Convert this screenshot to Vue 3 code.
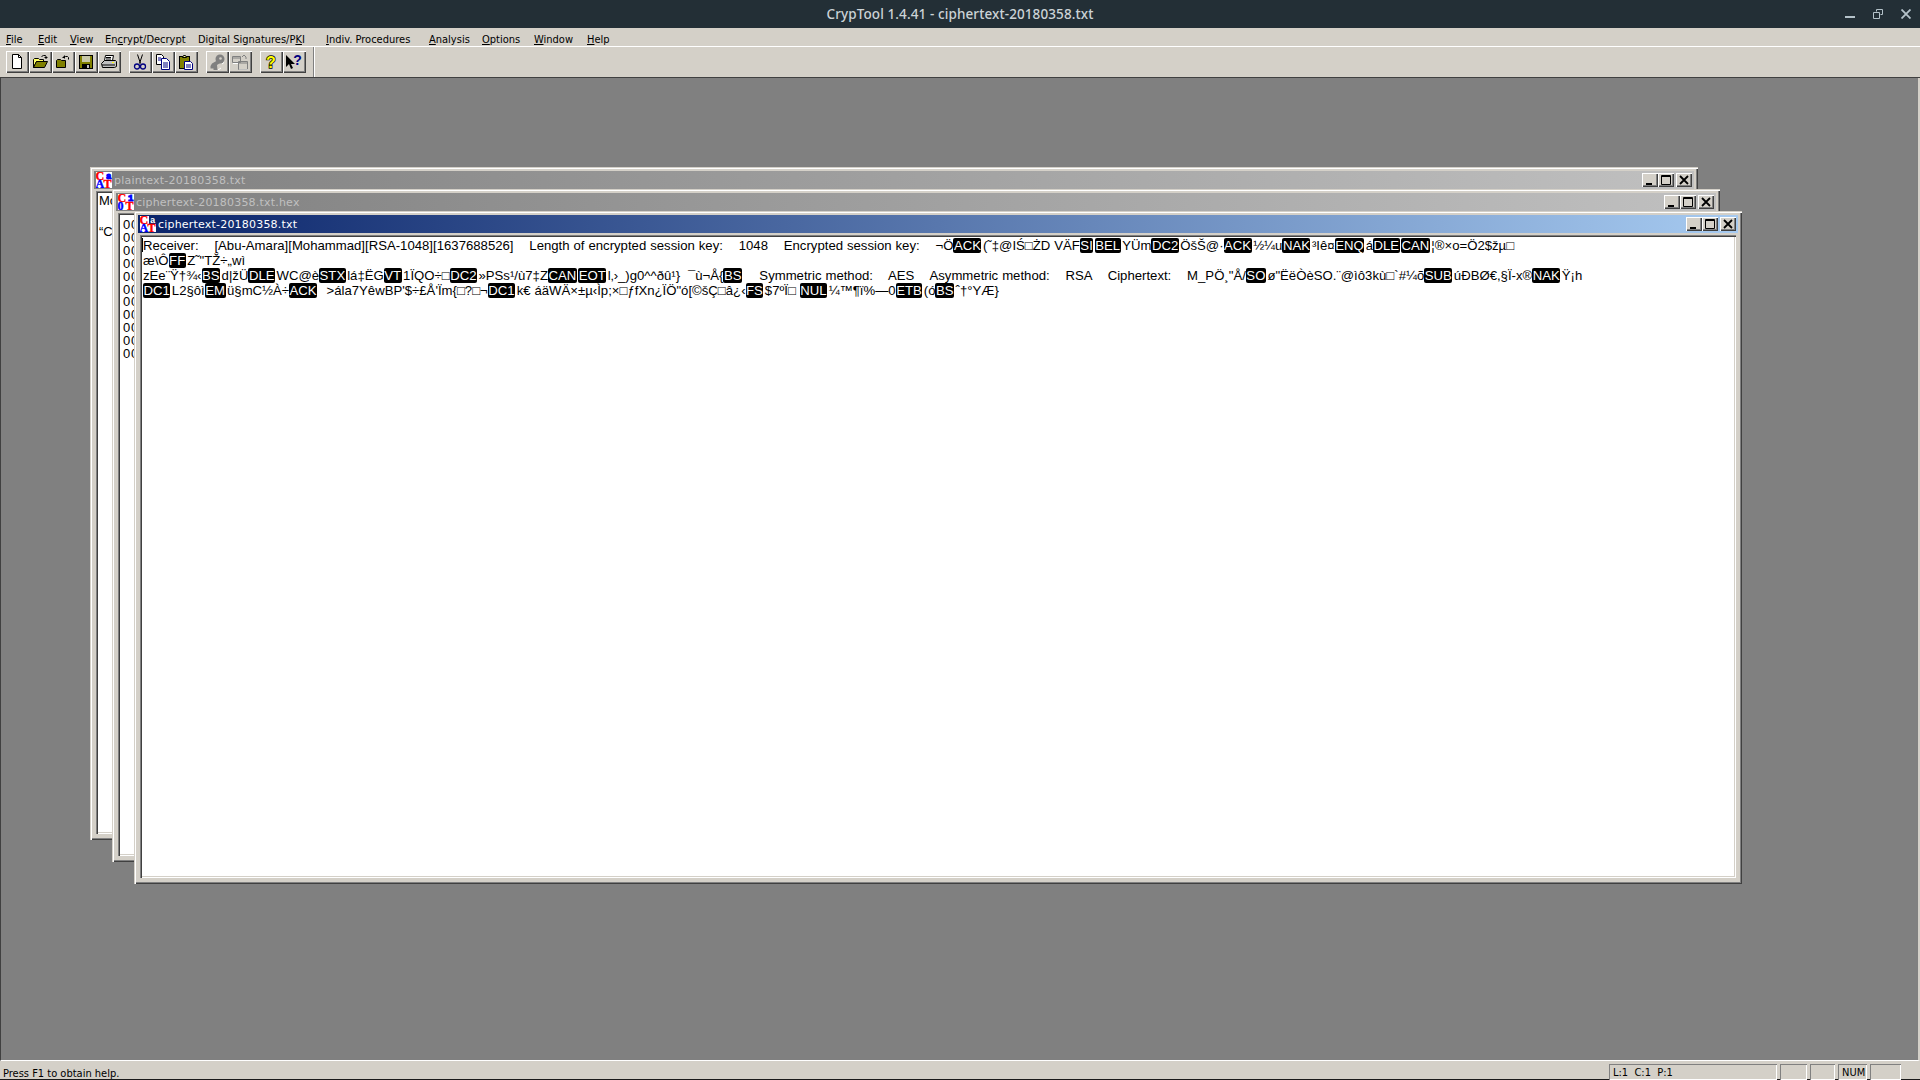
<template>
  <div class="app">
    <header class="titlebar">
      <span class="titlebar-text">CrypTool 1.4.41 - ciphertext-20180358.txt</span>
      <div class="wm-controls">
        <svg width="10" height="10" viewBox="0 0 10 10"><rect x="0" y="7" width="10" height="2" fill="#b4c2c9" /></svg>
        <svg width="10" height="10" viewBox="0 0 10 10"><path d="M3.5 2.5V0.5h6v5h-2M0.5 3.5h6v6h-6z" fill="none" stroke="#b4c2c9" /></svg>
        <svg width="10" height="10" viewBox="0 0 10 10"><path d="M0.5 0.5l9 9M9.5 0.5l-9 9" fill="none" stroke="#b4c2c9" stroke-width="1.8" /></svg>
      </div>
    </header>

    <nav class="menubar">
      <span v-for="m in menus" :key="m.label" class="menu-item" :style="{ width: m.w + 'px' }">
        {{ m.label.slice(0, m.u) }}<u>{{ m.label[m.u] }}</u>{{ m.label.slice(m.u + 1) }}
      </span>
    </nav>

    <div class="toolbar">
      <div class="tool-group">
        <button class="tool"><svg class="ico" viewBox="0 0 16 16"><path d="M3.5 .5h6l3 3v11h-9z" fill="#fff" stroke="#000" /><path d="M9.5 .5v3h3" fill="none" stroke="#000" /></svg></button>
        <button class="tool"><svg class="ico" viewBox="0 0 16 16"><path d="M1.5 13.5v-8l1-1h4l1 1h4v2h-7l-3 6" fill="#ffff66" stroke="#000" /><path d="M1.5 13.5l3-6h11l-3 6z" fill="#808000" stroke="#000" /><path d="M9.5 2.5l2-1h2l1 2" fill="none" stroke="#000" /><path d="M12 3h4l-2 2z" fill="#000" /></svg></button>
        <button class="tool"><svg class="ico" viewBox="0 0 16 16"><path d="M1.5 13.5v-7l1-1h3l1 1h4v7z" fill="#808000" stroke="#000" /><path d="M9.5 4.5v-1l1-1h2l1 1v2" fill="none" stroke="#000" /><path d="M7 4l3-3v3z" fill="#000" /></svg></button>
        <button class="tool"><svg class="ico" viewBox="0 0 16 16"><rect x="1.5" y="1.5" width="13" height="13" fill="#808000" stroke="#000" /><rect x="4" y="2" width="8" height="6" fill="#c8c8a8" /><rect x="4" y="10" width="8" height="4" fill="#000" /><rect x="9" y="11" width="2" height="3" fill="#c0c0c0" /></svg></button>
        <button class="tool"><svg class="ico" viewBox="0 0 16 16"><path d="M4.5 1.5h8l-1 5h-8z" fill="#fff" stroke="#000" /><path d="M.5 9.5l3-3h11l1 1v5l-2 1h-12z" fill="#c0c0c0" stroke="#000" /><path d="M1 11h13M5 3.500h5M5 5h5" stroke="#000" /><rect x="11" y="8" width="2" height="1" fill="#ff0" /></svg></button>
      </div>
      <div class="tool-group">
        <button class="tool"><svg class="ico" viewBox="0 0 16 16"><path d="M5.500 .5l3 9M10.500 .5l-3 9" stroke="#000" fill="none" /><circle cx="5" cy="12.500" r="2.500" fill="none" stroke="#000080" stroke-width="1.300" /><circle cx="11" cy="12.500" r="2.500" fill="none" stroke="#000080" stroke-width="1.300" /></svg></button>
        <button class="tool"><svg class="ico" viewBox="0 0 16 16"><path d="M1.500 .5h5l2 2v8h-7z" fill="#fff" stroke="#000" /><path d="M6.500 4.500h5l3 3v8h-8z" fill="#fff" stroke="#000080" /><path d="M8 9h5M8 11h5M8 13h5M3 4h3M3 6h3" stroke="#000080" /></svg></button>
        <button class="tool"><svg class="ico" viewBox="0 0 16 16"><rect x="1.500" y="2.500" width="10" height="12" fill="#808000" stroke="#000" /><path d="M4.500 3.500l1-2h2l1 2z" fill="#ffff99" stroke="#000" /><path d="M6.500 7.500h6l2 2v6h-8z" fill="#fff" stroke="#000080" /><path d="M8 11h5M8 13h5" stroke="#000080" /></svg></button>
      </div>
      <div class="tool-group">
        <button class="tool"><svg class="ico" viewBox="0 0 16 16"><circle cx="11" cy="5" r="4.500" fill="#808080" /><circle cx="11.500" cy="4.500" r="1.300" fill="#d4d0c8" /><path d="M9 6L3 9.500 1.500 12v2.500h3v1.500h4l-.5-5 3-2z" fill="#808080" /><path d="M13 10l2-1.500M9 16l3-2" stroke="#fff" /></svg></button>
        <button class="tool"><svg class="ico" viewBox="0 0 16 16"><path d="M.5 2.500h8v6h-8zM6.500 7.500h9v8h-9z" fill="#d4d0c8" stroke="#808080" /><path d="M1 4h7M7 9h8" stroke="#808080" /><path d="M10 3l2-2 2 2v2" fill="none" stroke="#808080" /><path d="M1 9.500h5M7 16h9" stroke="#fff" /></svg></button>
      </div>
      <div class="tool-group">
        <button class="tool"><svg class="ico" viewBox="0 0 16 16"><text x="8" y="14" text-anchor="middle" class="help-yellow">?</text></svg></button>
        <button class="tool"><svg class="ico" viewBox="0 0 16 16"><path d="M0 1v12l3-3 2 5 2-1-2-4h4z" fill="#000" /><text x="11.500" y="11" text-anchor="middle" class="help-navy">?</text></svg></button>
      </div>
      <div class="tool-sep"></div>
    </div>

    <main class="workspace">
      <section v-for="w in windows" :key="w.title" class="mdi" :class="[w.cls, { active: w.active }]">
        <div class="mdi-title">
          <svg class="cat" viewBox="0 0 16 16">
            <rect width="16" height="16" fill="#fff" />
            <rect x="9" y="0" width="7" height="8" :fill="w.active ? '#0a246a' : '#fff'" />
            <text x="-0.500" y="8" class="cat-big red">C</text>
            <text x="10" y="7" class="cat-small" :class="w.active ? 'wht' : 'blu'">{{ w.mark[0] }}</text>
            <text x="-0.500" y="16" class="cat-big blu">{{ w.mark[1] }}</text>
            <text x="7.500" y="16" class="cat-big red">T</text>
          </svg>
          <span class="mdi-name">{{ w.title }}</span>
          <div class="caption-btns">
            <button class="cap"><svg width="16" height="14" viewBox="0 0 16 14"><rect x="4" y="10" width="6" height="2" fill="#000" /></svg></button>
            <button class="cap"><svg width="16" height="14" viewBox="0 0 16 14"><path d="M3.500 2.500h9v9h-9z" fill="none" stroke="#000" /><path d="M3 3.500h10" stroke="#000" /></svg></button>
            <button class="cap close"><svg width="16" height="14" viewBox="0 0 16 14"><path d="M4 3l8 8M12 3l-8 8" stroke="#000" stroke-width="1.800" /></svg></button>
          </div>
        </div>
        <div class="mdi-client">
          <div v-if="w.cls === 'plain'" class="plain-text">
            <div>Mohammad</div>
            <div class="spaced">“Cipher</div>
          </div>
          <div v-else-if="w.cls === 'hex'" class="hex-text">
            <div v-for="n in 11" :key="n">00000</div>
          </div>
          <div v-else class="cipher-text">
            <i class="caret"></i>
            <div v-for="(line, i) in cipherLines" :key="i" class="cipher-line"><template v-for="(part, j) in line" :key="j"><b v-if="j % 2" class="ctl">{{ part }}</b><template v-else>{{ part }}</template></template></div>
          </div>
        </div>
      </section>
    </main>

    <footer class="statusbar">
      <span class="status-msg">Press F1 to obtain help.</span>
      <span class="pane p-pos">L:1&nbsp; C:1&nbsp; P:1</span>
      <span class="pane p-a"></span>
      <span class="pane p-b"></span>
      <span class="pane p-num">NUM</span>
      <span class="pane p-c"></span>
    </footer>
  </div>
</template>

<script setup>
const menus = [
  { label: 'File', u: 0, w: 32 },
  { label: 'Edit', u: 0, w: 32 },
  { label: 'View', u: 0, w: 35 },
  { label: 'Encrypt/Decrypt', u: 2, w: 93 },
  { label: 'Digital Signatures/PKI', u: 20, w: 128 },
  { label: 'Indiv. Procedures', u: 0, w: 103 },
  { label: 'Analysis', u: 0, w: 53 },
  { label: 'Options', u: 0, w: 52 },
  { label: 'Window', u: 0, w: 53 },
  { label: 'Help', u: 0, w: 30 }
]

const windows = [
  { title: 'plaintext-20180358.txt', cls: 'plain', mark: 'aA', active: false },
  { title: 'ciphertext-20180358.txt.hex', cls: 'hex', mark: '10', active: false },
  { title: 'ciphertext-20180358.txt', cls: 'cipher', mark: 'aA', active: true }
]

// control characters are marked with ‖ and come out as black chips
const rawLines = [
  'Receiver:    [Abu-Amara][Mohammad][RSA-1048][1637688526]    Length of encrypted session key:    1048    Encrypted session key:    ¬Ö‖ACK‖(˜‡@IŚ□ŻD VÄF‖SI‖‖BEL‖YÜm‖DC2‖ÖšŠ@·‖ACK‖½¼u‖NAK‖³Iê¤‖ENQ‖á‖DLE‖‖CAN‖¦®×o=Ö2$žµ□',
  'æ\\Ô‖FF‖Z˜"TŽ÷„wì',
  'zEe¨Ÿ†¾‹‖BS‖d|žÜ‖DLE‖WC@è‖STX‖lá‡ËG‖VT‖1ÏQO÷□‖DC2‖»PSs¹/ù7‡Z‖CAN‖‖EOT‖l‚›_)g0^^ðû¹}  ¯ù¬Å{‖BS‖    Symmetric method:    AES    Asymmetric method:    RSA    Ciphertext:    M_PÖ¸"Å/‖SO‖ø"ËëÒèSO.¨@ìô3kù□`#¼õ‖SUB‖úÐBØ€,§Ï-x®‖NAK‖Ÿ¡h',
  '‖DC1‖L2§ôì‖EM‖ü§mC½À÷‖ACK‖  >ála7YêwBP\'$÷£Å\'Ïm{□?□¬‖DC1‖k€ áäWÄ×±µ‹Ìp;×□ƒfXn¿ÏÖ"ó[©šÇ□â¿‹‖FS‖$7ºÏ□ ‖NUL‖¼™¶ï%—0‖ETB‖(ó‖BS‖ˆ†°YÆ}'
]
const cipherLines = rawLines.map((l) => l.split('‖'))
</script>

<style>
html, body { margin: 0; background: #808080; overflow: hidden; }
</style>

<style scoped>
.app {
  width: 1920px;
  height: 1080px;
  display: flex;
  flex-direction: column;
  overflow: hidden;
  font-family: "Liberation Sans", sans-serif;
  background: #d4d0c8;
}

.titlebar {
  height: 28px;
  flex: none;
  background: #232f36;
  display: flex;
  align-items: center;
  justify-content: center;
  position: relative;
}
.titlebar-text {
  font-family: "Noto Sans", sans-serif;
  font-size: 13.500px;
  letter-spacing: 0.1px;
  font-weight: 500;
  color: #ccd3d6;
}
.wm-controls {
  position: absolute;
  right: 9px;
  top: 9px;
  display: flex;
  gap: 18px;
}
.wm-controls svg { display: block; }

.menubar {
  height: 19px;
  flex: none;
  box-sizing: border-box;
  display: flex;
  align-items: center;
  padding-left: 6px;
  padding-top: 5px;
  font-family: "DejaVu Sans", sans-serif;
  font-stretch: condensed;
  font-size: 11px;
  color: #000;
  border-bottom: 1px solid #fff;
}
.menu-item { white-space: pre; flex: none; }

.toolbar {
  height: 30px;
  flex: none;
  display: flex;
  align-items: center;
  padding-left: 6px;
  gap: 8px;
  border-bottom: 1px solid #404040;
  box-sizing: content-box;
}
.tool-group { display: flex; }
.tool {
  width: 23px;
  height: 22px;
  padding: 0 1px 0 0;
  border: none;
  background: #d4d0c8;
  box-shadow: inset 1px 1px 0 #fff, inset -1px -1px 0 #404040, inset -2px -2px 0 #808080;
  display: flex;
  align-items: center;
  justify-content: center;
}
.ico { width: 16px; height: 16px; display: block; overflow: hidden; }
.help-yellow {
  font: bold 16px "Liberation Sans", sans-serif;
  fill: #ffff00;
  stroke: #000;
  stroke-width: 1.4px;
  paint-order: stroke;
}
.help-navy { font: bold 14px "Liberation Sans", sans-serif; fill: #000080; }
.tool-sep {
  width: 1px;
  height: 30px;
  background: #808080;
  border-right: 1px solid #fff;
  margin-left: -1px;
}

.workspace {
  flex: 1;
  position: relative;
  background: #808080;
  border-left: 1px solid #404040;
  border-right: 2px solid #d4d0c8;
  border-bottom: 1px solid #fff;
}

.mdi {
  position: absolute;
  width: 1608px;
  height: 673px;
  box-sizing: border-box;
  padding: 4px;
  background: #d4d0c8;
  box-shadow: inset 1px 1px 0 #d4d0c8, inset 2px 2px 0 #fff, inset -1px -1px 0 #404040, inset -2px -2px 0 #808080;
  display: flex;
  flex-direction: column;
}
.plain { left: 89px; top: 89px; }
.hex { left: 111px; top: 111px; }
.cipher { left: 133px; top: 133px; }

.mdi-title {
  height: 18px;
  flex: none;
  display: flex;
  align-items: center;
  background: linear-gradient(90deg, #808080, #c0c0c0);
  font-family: "DejaVu Sans", sans-serif;
  font-size: 11px;
  letter-spacing: 0.2px;
  color: #c0c0c0;
}
.active .mdi-title {
  background: linear-gradient(90deg, #0a246a, #a6caf0);
  color: #fff;
}
.cat { width: 16px; height: 16px; flex: none; margin: 0 2px 0 2px; display: block; }
.cat-big { font: bold 12px "Liberation Serif", serif; stroke-width: 0.4px; }
.cat-small { font: bold 9px "Liberation Mono", monospace; }
.red { fill: #ff0000; stroke: #ff0000; }
.blu { fill: #0000ff; stroke: #0000ff; }
.wht { fill: #fff; }
.mdi-name { flex: 1; white-space: nowrap; }
.caption-btns { display: flex; padding-right: 2px; }
.cap {
  width: 16px;
  height: 14px;
  padding: 0;
  border: none;
  background: #d4d0c8;
  box-shadow: inset 1px 1px 0 #fff, inset -1px -1px 0 #404040, inset -2px -2px 0 #808080;
}
.cap svg { display: block; }
.close { margin-left: 2px; }

.mdi-client {
  flex: 1;
  margin: 2px;
  background: #fff;
  box-shadow: inset 1px 1px 0 #808080, inset 2px 2px 0 #404040, inset -1px -1px 0 #fff, inset -2px -2px 0 #d4d0c8;
  padding: 2px;
  min-height: 0;
  overflow: hidden;
  position: relative;
}

.plain-text { font-size: 13px; line-height: 15px; padding-left: 1px; white-space: nowrap; color: #000; }
.spaced { margin-top: 16px; }
.hex-text {
  font-size: 13px;
  letter-spacing: 0.8px;
  line-height: 12.900px;
  padding-left: 3px;
  padding-top: 4px;
  color: #000;
}

.cipher-text {
  font-size: 13.170px;
  word-spacing: 0.3px;
  line-height: 15px;
  padding-left: 1px;
  padding-top: 1px;
  color: #000;
  position: relative;
}
.cipher-line { white-space: pre; height: 15px; }
.ctl {
  background: #000;
  color: #fff;
  font-weight: normal;
  border-radius: 2px;
  padding: 0 0.5px;
  margin-right: 1.5px;
}
.caret { position: absolute; left: 0; top: 1px; width: 1px; height: 14px; background: #000; }

.statusbar {
  height: 19px;
  flex: none;
  position: relative;
  display: flex;
  align-items: center;
  font-family: "DejaVu Sans", sans-serif;
  font-stretch: condensed;
  font-size: 11px;
  color: #000;
  padding-top: 4px;
  box-sizing: border-box;
  border-bottom: 1px solid #1a1a1a;
}
.status-msg { width: 1609px; padding-left: 3px; padding-top: 2px; box-sizing: border-box; flex: none; }
.pane {
  height: 16px;
  box-sizing: border-box;
  flex: none;
  box-shadow: inset 1px 1px 0 #808080, inset -1px -1px 0 #fff;
  padding-left: 4px;
  margin-right: 3px;
  line-height: 18px;
}
.p-pos { width: 168px; }
.p-a { width: 27px; }
.p-b { width: 25px; }
.p-num { width: 29px; }
.p-c { width: 31px; }
</style>
